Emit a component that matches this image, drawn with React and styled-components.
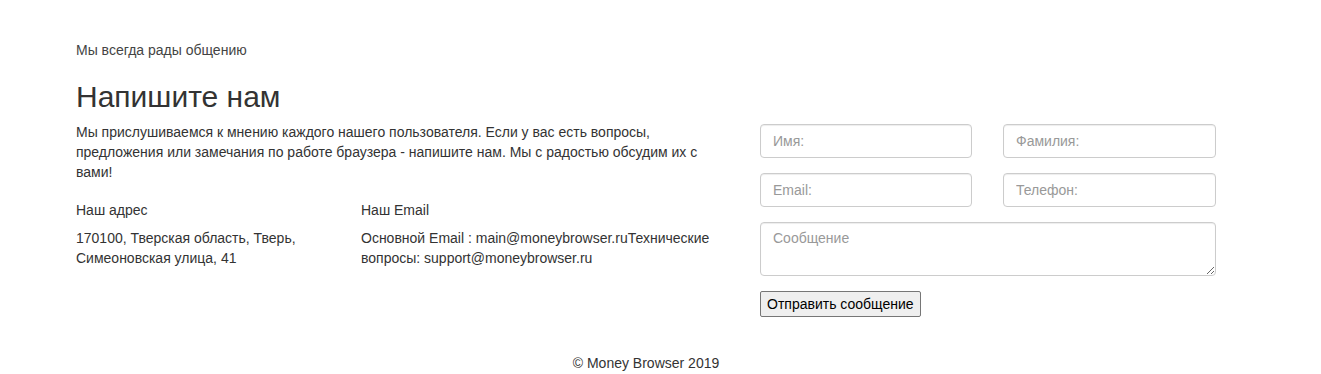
import React from 'react';
import styled, { createGlobalStyle } from 'styled-components';

const GlobalStyle = createGlobalStyle`
  body {
    margin: 0;
    background: #fff;
    font-family: "Liberation Sans", Arial, sans-serif;
    font-size: 14px;
    line-height: 20px;
    color: #333;
  }
`;

const Page = styled.div`
  width: 1140px;
  margin-left: 76px;
  padding-top: 40px;
`;

const Kicker = styled.div`
  font-size: 14px;
  line-height: 20px;
  color: #444;
`;

const Title = styled.h2`
  margin: 20px 0 9px;
  font-size: 30px;
  font-weight: 400;
  line-height: 33px;
  color: #333;
`;

const Row = styled.div`
  display: grid;
  grid-template-columns: 684px 456px;
`;

const Info = styled.div`
  padding-right: 32px;
`;

const Lead = styled.p`
  margin: 0 0 18px;
`;

const Contacts = styled.div`
  display: grid;
  grid-template-columns: 285px 1fr;
`;

const ContactTitle = styled.div`
  margin-bottom: 8px;
`;

const ContactText = styled.div`
  padding-right: 15px;
`;

const Form = styled.form`
  display: flex;
  flex-direction: column;
  gap: 15px;
  padding-top: 2px;
`;

const Pair = styled.div`
  display: grid;
  grid-template-columns: 212px 213px;
  column-gap: 31px;
`;

const fieldCss = `
  box-sizing: border-box;
  width: 100%;
  padding: 6px 12px;
  font-family: "Liberation Sans", Arial, sans-serif;
  font-size: 14px;
  color: #555;
  background: #fff;
  border: 1px solid #ccc;
  border-radius: 4px;
  box-shadow: inset 0 1px 1px rgba(0, 0, 0, 0.075);
  outline: none;
  &::placeholder {
    color: #999;
  }
`;

const Input = styled.input`
  ${fieldCss}
  height: 34px;
`;

const Message = styled.textarea`
  ${fieldCss}
  display: block;
  height: 54px;
  line-height: 20px;
  padding-top: 5px;
  resize: vertical;
`;

const Send = styled.button`
  align-self: flex-start;
  height: 26px;
  padding: 2px 6px;
  font-family: "Liberation Sans", Arial, sans-serif;
  font-size: 14px;
  color: #000;
  background: #efefef;
  border: 1px solid #767676;
  border-radius: 2px;
`;

const Footer = styled.footer`
  margin-top: 36px;
  text-align: center;
  font-size: 14px;
  color: #333;
`;

export default function App() {
  return (
    <>
      <GlobalStyle />
      <Page>
        <Kicker>Мы всегда рады общению</Kicker>
        <Title>Напишите нам</Title>
        <Row>
          <Info>
            <Lead>
              Мы прислушиваемся к мнению каждого нашего пользователя. Если у вас есть вопросы,
              предложения или замечания по работе браузера - напишите нам. Мы с радостью обсудим их с
              вами!
            </Lead>
            <Contacts>
              <ContactText>
                <ContactTitle>Наш адрес</ContactTitle>
                170100, Тверская область, Тверь, Симеоновская улица, 41
              </ContactText>
              <ContactText>
                <ContactTitle>Наш Email</ContactTitle>
                Основной Email : main@moneybrowser.ruТехнические вопросы: support@moneybrowser.ru
              </ContactText>
            </Contacts>
          </Info>
          <Form onSubmit={e => e.preventDefault()}>
            <Pair>
              <Input placeholder="Имя:" />
              <Input placeholder="Фамилия:" />
            </Pair>
            <Pair>
              <Input placeholder="Email:" />
              <Input placeholder="Телефон:" />
            </Pair>
            <Message placeholder="Сообщение" />
            <Send type="submit">Отправить сообщение</Send>
          </Form>
        </Row>
        <Footer>© Money Browser 2019</Footer>
      </Page>
    </>
  );
}
